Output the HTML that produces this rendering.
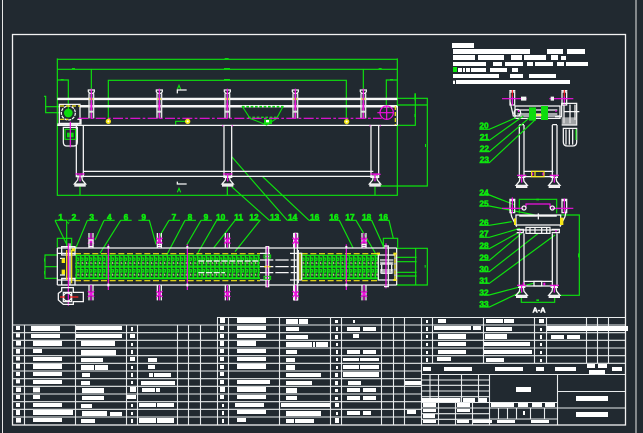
<!DOCTYPE html>
<html><head><meta charset="utf-8"><title>CAD drawing</title>
<style>
html,body{margin:0;padding:0;background:#212930;width:643px;height:433px;overflow:hidden}
svg{display:block}
text{font-family:"Liberation Sans",sans-serif;font-weight:bold;text-anchor:middle}
.w{fill:none;stroke:#f6f6f6;stroke-width:3.8}
.g{fill:none;stroke:#0ee20e;stroke-width:3.5}
.m{fill:none;stroke:#f010e0;stroke-width:3.6}
.y{fill:none;stroke:#f5e616;stroke-width:3.6}
.n{fill:#0ee60e;stroke:#0ee60e;stroke-width:1.8;font-size:25px}
.t{fill:#fff}
</style></head><body>
<svg width="643" height="433" viewBox="0 0 643 433" xmlns="http://www.w3.org/2000/svg">
<defs>
<pattern id="ch" patternUnits="userSpaceOnUse" x="135" y="150" width="13" height="35">
<path d="M4 0V35" stroke="#0ee60e" stroke-width="4.6" fill="none"/>
<path d="M4 9h7v7h-6M4 25h-4M13 25h-2" stroke="#0ee60e" stroke-width="3.6" fill="none"/>
<path d="M0 1.5h13M0 33.5h13" stroke="#0ee60e" stroke-width="3.6" fill="none"/>
<path d="M9 21v6" stroke="#e8f2a0" stroke-width="2.6" fill="none"/>
</pattern>
<g id="post">
<path class="w" d="M-9 0h18v5l-4 5h-10l-4-5zM-7 10V85M7 10V85" />
<path d="M-6 24h12v6h-12z" fill="#f5e616"/>
<path d="M-7 10h14v75h-14z" fill="#b8b8c0" opacity=".35"/>
<path class="m" d="M0 -4V86" stroke-width="2.4"/>
<path d="M-3 40h6v20h-6z" fill="#f010e0" opacity=".8"/>
<path d="M-6 62h12v6h-12z" fill="#e0e0e0"/>
</g>
<g id="foot">
<path class="w" d="M-11 0h22M-5 0L-7 12L-17 24H17L7 12L5 0M-17 30H17"/>
<path d="M-17 24h34v6h-34z" fill="#eee"/>
<path class="m" d="M-14 -6H14M0 -8V16"/>
</g>
<g id="planpost">
<path class="m" d="M0 -44V0M0 112V158"/>
<path class="w" d="M-6 -44V0M6 -44V0M-6 112V158M6 112V158"/>
<path d="M-9 -30L9 -12M9 -30L-9 -12" stroke="#f010e0" stroke-width="4.5"/>
<path d="M-9 130L9 148M9 130L-9 148" stroke="#f010e0" stroke-width="4.5"/>
</g>
</defs>

<rect width="643" height="433" fill="#212930"/>

<!-- frames -->
<path d="M2.5 0V433M636 0V433" stroke="#e6e6e6" stroke-width="1" fill="none"/>
<rect x="12.5" y="34.5" width="613" height="390.5" fill="none" stroke="#f2f2f2" stroke-width="1.3"/>

<!-- elevation -->
<g transform="translate(0,30) scale(.33333)">
<path class="g" d="M172 85V496H1192V85M172 88H1192M172 118H1192M172 150H205V240M274 118V185M325 270V151H1039V270M1090 118V185M1159 225V150H1192M132 199H137V248H180M137 230H180M1192 205H1282V468H1140M1192 225H1282M1246 190V286H1192M240 470V496M682 470V496M1125 470V496M527 284V274H560"/>
<path class="g" d="M695 380L862 571M788 440L927 571M695 470L808 571" stroke-width="3.8"/>
<path d="M216 114h9v5h-9zM182 147h9v5h-9zM674 84h12v5h-12zM672 114h18v5h-18zM672 147h18v5h-18zM1136 114h9v5h-9zM1170 147h9v5h-9zM1243 190h5v21h-5zM1243 252h5v9h-5zM1275 342h3v9h-3z" fill="#0ddc0d"/>
<path class="g" d="M532 178l5-12 5 12M532 487l5-12 5 12" stroke-width="4"/>
<path class="w" d="M532 190V180H560M532 455V462H560" stroke-width="3"/>

<path class="w" d="M172 205H1192M172 208.500H1192" stroke-width="3"/>
<path class="w" d="M240 227H1192M240 230.500H1192" stroke-width="2.8"/>
<path class="w" d="M172 286H1192"/>
<path class="w" d="M250 424H1120M250 439H1120"/>
<path class="w" d="M229 286V440H250V286M672 286V442H695V286M1113 286V442H1136V286"/>
<use href="#post" x="274" y="180"/><use href="#post" x="478" y="180"/><use href="#post" x="682" y="180"/><use href="#post" x="886" y="180"/><use href="#post" x="1090" y="180"/>
<use href="#foot" x="240" y="438"/><use href="#foot" x="683" y="438"/><use href="#foot" x="1125" y="438"/>
<path class="m" d="M1120 433H1142M1110 286v3M1141 286v3M668 286v3M697 286v3"/>

<!-- centre curve -->
<path d="M726 228L750 265 800 285 830 265 850 228" fill="none" stroke="#0ddc0d" stroke-width="3.4"/>
<path d="M726 230H850M744 262H830" stroke="#0ddc0d" stroke-width="4.4" stroke-dasharray="8 5" fill="none"/>
<path d="M792 268h24v14h-24z" fill="#0ddc0d"/><path d="M798 270h9v7h-9z" fill="#fff"/>

<!-- motor left -->
<path class="w" d="M178 223H240V280H178ZM172 282H232V286H172M232 268H243V282H232"/>
<circle cx="205" cy="249" r="21" class="w" stroke-dasharray="9 3"/>
<circle cx="205" cy="249" r="13" fill="#0ddc0d"/>
<path class="y" d="M180 228H240M180 268H205" stroke-dasharray="12 6"/>
<path class="w" d="M190 292H232V336Q232 348 222 348H200Q190 348 190 336Z"/>
<path class="g" d="M195 298H227V328H195Z"/>
<path d="M201 308h20v14h-20z" fill="#0ddc0d"/>
<path class="m" d="M211 275V352"/>

<!-- centre line -->
<path class="m" d="M235 265H1145" stroke-dasharray="30 7 8 7"/>
<g fill="#f5e616"><circle cx="325" cy="274" r="8"/><circle cx="563" cy="274" r="8"/><circle cx="1040" cy="275" r="8"/></g>
<g fill="#fff"><circle cx="325" cy="274" r="3"/><circle cx="563" cy="274" r="3"/><circle cx="1040" cy="275" r="3"/></g>

<!-- right wheel -->
<circle cx="1160" cy="248" r="20" class="m"/>
<path class="m" d="M1132 248H1180M1160 226V270"/>
<path class="y" d="M1186 228V285" stroke-dasharray="12 6"/>
<path class="w" d="M1192 228V286" stroke-width="3"/>
</g>

<!-- side views -->
<g transform="translate(440,30) scale(.33333)">
<path class="t" d="M36 39h66v15h-66zM39 57h231v15h-231zM321 57h48v15h-48zM381 57h54v15h-54zM39 75h66v15h-66zM114 75h78v15h-78zM213 75h33v15h-33zM252 75h66v15h-66zM333 75h21v15h-21zM363 78h15v12h-15zM39 96h99v12h-99zM159 96h27v12h-27zM195 96h54v12h-54zM261 96h18v12h-18zM285 96h54v12h-54zM351 96h21v12h-21zM378 96h66v12h-66zM54 114h12v12h-12zM69 114h6v12h-6zM78 114h12v12h-12zM93 114h45v12h-45zM150 114h51v12h-51zM216 114h18v12h-18zM39 132h138v12h-138zM210 132h39v12h-39zM267 132h81v12h-81zM39 152h6v10h-6zM48 150h342v12h-342z"/>
<path d="M39 111h12v15h-12z" fill="#0ee60e"/>

<path class="w" d="M238 285V442H252V285M337 285V442H351V285M250 424H340M250 440H340M238 284H252M337 284H351"/>
<path class="y" d="M275 424H312V440H275ZM285 424V440" stroke-width="3.5"/>
<path class="m" d="M278 428v8M309 428v8" stroke-width="6"/>
<use href="#foot" x="245" y="442"/><use href="#foot" x="343" y="442"/>

<path class="w" d="M210 215L220 258H360M225 228H360V265H225ZM232 240H352M232 252H352"/>
<circle cx="232" cy="248" r="10" class="w"/>
<path class="w" d="M210 186H224V225H210ZM366 186H380V225H366ZM208 182H226M364 182H382"/>
<path d="M267 232h21v40h-21zM303 228h21v42h-21z" fill="#0ddc0d"/>
<path class="y" d="M288 255H305"/>
<path class="m" d="M186 206H260M328 206H400M217 196V226M373 196V226M236 240v6M348 240v6"/>
<path d="M217 180V200M373 180V200" stroke="#ff2020" stroke-width="3.4"/>
<path d="M243 200h16v12h-16zM332 200h10v12h-10z" fill="#f4f4f4"/>
<path class="w" d="M345 260H365V220H410V285H365M372 224V280M390 224V280M372 245H418M405 224V270"/>
<path d="M365 262h45v22h-45z" fill="#d9d9d9" opacity=".7"/>
<path class="w" d="M370 295H410V336Q410 348 398 348H382Q370 348 370 336ZM378 298V344M388 298V344M398 298V344"/>
<path class="g" d="M408 298V330"/>

<path class="g" d="M118 298H148L228 263M118 331H148L250 258M118 365H148L270 262M118 398H148L285 270"/>
<path class="g" d="M118 495H148L186 510"/>
<text class="n" x="132" y="296">20</text><text class="n" x="133" y="330">21</text><text class="n" x="133" y="364">22</text><text class="n" x="133" y="397">23</text>
</g>

<g transform="translate(440,180) scale(.33333)">
<path class="g" d="M238 100V58H350V100M355 105H418V346H350M244 345V367H344V345"/>
<path d="M289 56h8v5h-8zM414 220h5v12h-5zM289 358h8v5h-8z" fill="#0ddc0d"/>
<path class="g" d="M118 45H148L225 75M118 78H148L285 105M118 136H148L215 125M118 172H148L240 145M118 206H148L240 155M118 241H148L245 160M118 275H148L295 160M118 310H148L345 165M118 345H148L280 310M118 381H148L245 335"/>
<text class="n" x="132" y="46">24</text><text class="n" x="132" y="79">25</text><text class="n" x="132" y="137">26</text><text class="n" x="132" y="170">27</text><text class="n" x="132" y="206">28</text><text class="n" x="132" y="241">29</text><text class="n" x="132" y="276">30</text><text class="n" x="132" y="310">31</text><text class="n" x="132" y="346">32</text><text class="n" x="132" y="381">33</text>

<path class="w" d="M238 160V320H252V160M337 160V320H351V160M250 304H338M250 318H338"/>
<path class="w" d="M282 304H305V318H282Z"/>
<path class="m" d="M250 307v8"/>
<path d="M310 308h6v8h-6z" fill="#f010e0"/>
<use href="#foot" x="245" y="322"/><use href="#foot" x="343" y="322"/>
<path class="w" d="M210 85L215 110 230 140M380 85L375 110 360 140M228 105H362V135H228ZM238 108H350M232 150H355M258 142H330V160H258ZM270 142V160M285 142V160M305 142V160M320 142V160M230 148H250V158H230M335 148H358V158H335"/>
<path class="w" d="M210 62H224V98H210ZM366 62H380V98H366ZM208 58H226M364 58H382"/>
<path class="m" d="M258 85V72H330V85M186 85H250M335 85H400M217 52V100M373 55V100M240 152v6M348 150v6"/>
<circle cx="252" cy="84" r="6" class="w"/><circle cx="337" cy="84" r="6" class="w"/>
<path d="M222 115h6v20h-6zM360 113h10v22h-10z" fill="#f5e616"/>
<path class="w" d="M238 108H290M300 108H350M295 100V118" stroke-width="5"/>
<text x="297" y="398" font-size="22" fill="#fff" stroke="#fff" stroke-width="1.4">A-A</text>
</g>

<!-- plan view -->
<g transform="translate(30,205) scale(.33333)">
<path class="g" d="M82 150H45V220H82M45 185H82M82 128V100H125V128M1060 128V100H1103V128M1100 130H1192V240H1100M1157 130V240M1100 157H1160M1100 170H1160M1100 202H1160M1100 213H1160"/>
<path d="M42 160h4v10h-4zM42 198h4v10h-4zM1184 180h3v8h-3z" fill="#0ddc0d"/>
<path class="g" d="M75 46H110L110 125M75 46L110 118M115 46H150M172 46H203M172 46L135 135M222 46H254M222 46L195 105M272 46H305M272 46L210 145M325 46H358L378 118M417 46H450M417 46L385 100M465 46H498M465 46L410 150M513 46H546M513 46L470 120M560 46H595M560 46L500 150M615 46H640M615 46L550 130M658 46H690L615 140M718 46H753M772 46H803M837 46H870M897 46H928L970 130M946 46H978L1038 148M995 46H1025L1063 130M1045 46H1077L1090 100"/>
<path d="M112 50l3 6 3-6" fill="none" stroke="#0ddc0d" stroke-width="2"/>
<text class="n" x="92" y="45">1</text><text class="n" x="132" y="45">2</text><text class="n" x="185" y="45">3</text><text class="n" x="238" y="45">4</text><text class="n" x="288" y="45">6</text><text class="n" x="341" y="45">9</text><text class="n" x="432" y="45">7</text><text class="n" x="480" y="45">8</text><text class="n" x="528" y="45">9</text><text class="n" x="572" y="45">10</text><text class="n" x="626" y="45">11</text><text class="n" x="672" y="45">12</text><text class="n" x="734" y="45">13</text><text class="n" x="788" y="45">14</text><text class="n" x="854" y="45">16</text><text class="n" x="912" y="45">16</text><text class="n" x="960" y="45">17</text><text class="n" x="1010" y="45">18</text><text class="n" x="1060" y="45">16</text>

<!-- rails -->
<path class="w" d="M82 129H1100M82 240H1100" stroke-width="4.4"/>
<path class="w" d="M82 145H135M82 225H135M82 129V240M1100 129V240" stroke-width="3"/>
<!-- chain -->
<rect x="135" y="150" width="555" height="35" fill="url(#ch)"/>
<rect x="135" y="185" width="555" height="35" fill="url(#ch)"/>
<rect x="815" y="150" width="230" height="35" fill="url(#ch)"/>
<rect x="815" y="185" width="230" height="35" fill="url(#ch)"/>
<path class="y" d="M135 146H690M135 227H690M815 146H1045M815 227H1045" stroke-dasharray="18 8" stroke-width="5"/>
<path d="M135 151H690M135 221H690M815 151H1045M815 221H1045" stroke="#0ee60e" stroke-width="3.6" fill="none"/>
<path d="M505 168H585M505 203H585M575 168H690" stroke="#fff" stroke-width="3.4" stroke-dasharray="18 5" fill="none"/>
<path class="w" d="M690 145H720M690 165H800M690 185H800M690 203H800M690 225H720M780 145H815M780 225H815" stroke-width="3" stroke-dasharray="40 6"/>
<path class="w" d="M805 135V235"/>
<!-- joint -->
<path class="w" d="M708 125H716V245H708ZM793 85H802V285H793ZM808 145H815V225"/>
<path d="M702 150h20v9h-20zM702 214h20v9h-20z" fill="none" stroke="#0ddc0d" stroke-width="3"/>
<path class="y" d="M702 185H722M712 180V190"/>
<path class="y" d="M810 145V225"/>
<path class="m" d="M712 125V248" stroke-width="2" opacity=".7"/>

<!-- posts -->
<use href="#planpost" x="183" y="128"/><use href="#planpost" x="388" y="128"/><use href="#planpost" x="592" y="128"/><use href="#planpost" x="797" y="128"/><use href="#planpost" x="1002" y="128"/>
<path class="w" d="M177 105H189V125H177ZM382 118H394V124H382M996 118H1008V124H996"/>
<path class="m" d="M235 118V255M472 118V255M949 118V255"/>
<path d="M232 236h6v8h-6zM469 236h6v8h-6zM946 236h6v8h-6zM232 123h6v8h-6zM469 123h6v8h-6zM946 123h6v8h-6z" fill="#f4f4f4"/>

<!-- left drive -->
<path class="w" d="M95 125H135V150H95ZM95 220H135V240H95ZM90 160H105M90 210H105" />
<path d="M125 130h10v9h-10zM95 160h10v14h-10zM95 194h10v14h-10z" fill="#f5e616"/>
<path class="y" d="M110 135V225M125 135V235"/>
<path class="m" d="M115 115V302"/>
<path class="w" d="M120 115V240"/>
<path class="w" d="M95 248H130V262H160V290H130V298H100L85 285V265L95 258Z M100 262H125V290H100Z" stroke-width="4.4"/>
<circle cx="112" cy="276" r="12" class="w"/>
<path d="M90 276H105M120 276H145" stroke="#ff2020" stroke-width="3.4"/>
<!-- right drive -->
<path class="w" d="M1045 150H1095V225H1045ZM1050 165H1090M1050 195H1090M1055 175H1085V205H1055Z"/>
<path d="M1050 170h40v10h-40zM1050 198h40v8h-40z" fill="#cfd2d2" opacity=".8"/>
<path class="y" d="M1095 145V225" stroke-dasharray="12 5"/>
<path class="m" d="M1068 115V250"/>
<path class="w" d="M1062 123H1075V245H1062" stroke-width="2.6"/>
<path d="M1040 143h10v6h-10zM1090 143h10v6h-10zM1090 222h10v6h-10z" fill="#f5e616"/>
</g>

<!-- tables -->
<g fill="none" stroke="#e8ebec" stroke-width="1.1">
<path d="M12.5 325H217M12.5 332.7H217M12.5 340.3H217M12.5 348H217M12.5 355.7H217M12.5 363.3H217M12.5 371H217M12.5 378.7H217M12.5 386.3H217M12.5 394H217M12.5 401.7H217M12.5 409.3H217M12.5 417H217"/>
<path d="M24.5 325V425M75.5 325V425M126.5 325V425M137.5 325V425M177.5 325V425M188.5 325V425M200.5 325V425"/>
<path d="M217.5 317.5V425M228.5 317.5V425M279.5 317.5V425M330.5 317.5V425M341.500 317.5V425M381.5 317.5V425M393.5 317.5V425M404.5 317.5V425M421.5 317.5V425"/>
<path d="M217 317.5H625M217 325H421M217 332.7H421M217 340.3H421M217 348H421M217 355.7H421M217 363.3H421M217 371H421M217 378.7H421M217 386.3H421M217 394H421M217 401.7H421M217 409.3H421M217 417H421"/>
<path d="M432.5 317.5V363M483.5 317.5V363M534.5 317.5V363M546.5 317.5V363M586.5 317.5V363M597.5 317.5V363M608.5 317.5V363"/>
<path d="M421 325H625M421 332.7H625M421 340.3H625M421 348H625M421 355.7H625M421 363.3H625M421 374.5H625"/>
<path d="M489.5 374.5V425M557.5 374.5V425M557.5 391.5H625M557.5 408H625M489.5 402.5H557.5"/>
<path d="M421 380H489M421 385.3H489M421 391H489M421 396.7H489M421 402.5H489M421 408H489M421 413.7H489M421 419.3H489"/>
<path d="M430 374.5V402.5M438.5 374.5V425M461.5 374.5V402.5M455.5 402.5V425M478.5 374.5V402.5M472.5 402.5V425"/>
<path d="M489.5 408H557.5M489.5 419H557.5M498.5 408V419M507.5 408V419M516.5 408V419M530.5 408V419M544.5 408V419"/>
</g>

<g transform="translate(0,310) scale(.33333)">
<path class="t" d="M48 48h12v12h-12zM48 70h12v12h-12zM48 93h15v14h-15zM48 117h12v14h-12zM48 140h12v12h-12zM48 162h12v14h-12zM48 186h12v12h-12zM48 208h12v12h-12zM48 232h15v14h-15zM48 255h12v12h-12zM48 279h12v12h-12zM48 300h12v15h-12zM48 324h15v14h-15z"/>
<path class="t" d="M93 48h87v15h-87zM93 72h87v12h-87zM99 93h87v15h-87zM99 117h27v12h-27zM99 141h87v12h-87zM99 162h87v15h-87zM99 186h87v12h-87zM99 210h87v12h-87zM99 232h21v15h-21zM99 255h21v12h-21zM99 279h87v12h-87zM99 300h120v15h-120zM99 324h87v12h-87z"/>
<path class="t" d="M228 48h138v12h-138zM228 72h138v12h-138zM243 93h102v15h-102zM243 120h105v15h-105zM243 144h66v12h-66zM243 165h39v15h-39zM285 165h39v15h-39zM246 189h24v12h-24zM243 213h27v12h-27zM246 234h66v15h-66zM246 258h66v12h-66zM243 282h33v12h-33zM246 303h75v15h-75zM330 306h36v12h-36zM243 327h42v12h-42z"/>
<path class="t" d="M393 51h6v12h-6zM390 72h15v12h-15zM393 99h6v9h-6zM393 120h6v12h-6zM390 141h15v12h-15zM393 168h6v9h-6zM393 189h6v12h-6zM393 213h6v9h-6zM390 231h18v15h-18zM381 255h27v12h-27zM393 282h6v9h-6zM393 306h6v9h-6zM393 327h6v12h-6z"/>
<path class="t" d="M444 144h27v12h-27zM444 165h21v12h-21zM447 189h12v12h-12zM462 189h51v12h-51zM423 213h102v12h-102zM426 234h39v12h-39zM468 234h12v12h-12zM417 279h51v12h-51zM471 279h51v12h-51zM417 324h51v15h-51zM471 324h51v15h-51z"/>
</g>

<g transform="translate(210,310) scale(.33333)">
<path class="t" d="M30 24h15v15h-15zM30 48h12v12h-12zM30 72h12v12h-12zM30 93h12v15h-12zM30 117h12v12h-12zM30 141h12v12h-12zM30 165h12v12h-12zM30 186h12v12h-12zM30 210h12v12h-12zM30 231h15v15h-15zM30 255h12v12h-12zM36 282h6v9h-6zM36 303h6v12h-6zM36 327h6v12h-6z"/>
<path class="t" d="M81 24h87v15h-87zM81 48h87v12h-87zM81 72h87v12h-87zM81 93h57v15h-57zM81 117h87v12h-87zM81 141h87v12h-87zM81 162h87v15h-87zM81 210h99v12h-99zM81 231h87v15h-87zM81 255h87v12h-87zM75 279h87v12h-87zM81 300h87v12h-87zM81 324h27v12h-27z"/>
<path class="t" d="M228 27h36v15h-36zM267 27h27v15h-27zM228 51h39v12h-39zM228 75h66v12h-66zM228 96h78v15h-78zM309 96h6v15h-6zM318 96h36v15h-36zM228 120h33v12h-33zM228 144h27v12h-27zM228 165h27v15h-27zM228 189h105v12h-105zM228 213h78v12h-78zM228 234h33v15h-33zM228 258h33v12h-33zM213 279h147v12h-147zM228 303h105v15h-105zM228 327h24v12h-24zM255 327h57v12h-57z"/>
<path class="t" d="M375 30h9v9h-9zM378 51h6v12h-6zM375 75h9v12h-9zM378 99h6v9h-6zM378 120h6v12h-6zM378 144h6v9h-6zM378 168h6v9h-6zM375 189h9v12h-9zM375 213h9v12h-9zM375 237h9v9h-9zM375 261h9v9h-9zM375 279h12v12h-12zM378 306h6v9h-6zM375 324h12v15h-12z"/>
<path class="t" d="M429 30h6v9h-6zM411 51h39v12h-39zM459 51h39v12h-39zM429 72h18v12h-18zM411 120h39v12h-39zM459 120h39v12h-39zM399 144h48v9h-48zM450 144h57v9h-57zM399 165h48v12h-48zM450 165h57v12h-57zM399 186h108v15h-108zM414 213h39v12h-39zM411 234h39v12h-39zM459 234h39v12h-39zM411 258h39v12h-39zM459 258h39v12h-39zM411 303h39v12h-39zM459 303h24v12h-24zM585 213h48v12h-48zM591 300h27v12h-27z"/>
</g>

<g transform="translate(420,310) scale(.33333)">
<path class="t" d="M18 30h6v9h-6zM18 51h6v12h-6zM18 75h6v9h-6zM18 99h6v9h-6zM18 123h6v9h-6zM18 144h6v12h-6zM9 171h24v12h-24z"/>
<path class="t" d="M54 27h24v12h-24zM42 48h111v12h-111zM159 48h24v12h-24zM54 72h84v15h-84zM54 96h84v12h-84zM54 120h84v12h-84zM51 141h42v12h-42zM72 171h84v12h-84z"/>
<path class="t" d="M198 27h51v12h-51zM252 27h30v12h-30zM198 51h78v12h-78zM195 72h66v15h-66zM192 96h138v12h-138zM192 120h144v12h-144zM198 144h54v12h-54zM225 171h84v12h-84z"/>
<path class="t" d="M357 27h15v12h-15zM360 54h6v9h-6zM360 75h6v12h-6zM360 99h6v9h-6zM360 123h6v9h-6zM360 147h6v9h-6zM348 171h24v12h-24z"/>
<path class="t" d="M381 48h243v15h-243zM393 75h39v12h-39zM441 75h39v12h-39zM405 171h63v12h-63zM501 162h24v12h-24zM534 162h27v12h-27zM507 180h48v12h-48zM576 171h30v12h-30z"/>
<path class="t" d="M4 264h117v12h-117zM129 264h36v12h-36zM177 264h24v12h-24zM9 279h39v12h-39zM9 297h39v9h-39zM111 279h39v12h-39zM111 297h39v9h-39zM9 312h36v12h-36zM9 330h39v9h-39zM111 330h36v9h-36zM159 330h57v9h-57zM231 330h54v9h-54zM333 330h54v9h-54zM213 279h69v12h-69zM294 279h30v12h-30zM336 279h30v12h-30zM375 279h30v12h-30zM309 303h6v12h-6zM288 231h45v15h-45zM468 258h96v15h-96zM468 306h96v15h-96z"/>
</g>
</svg>
</body></html>
